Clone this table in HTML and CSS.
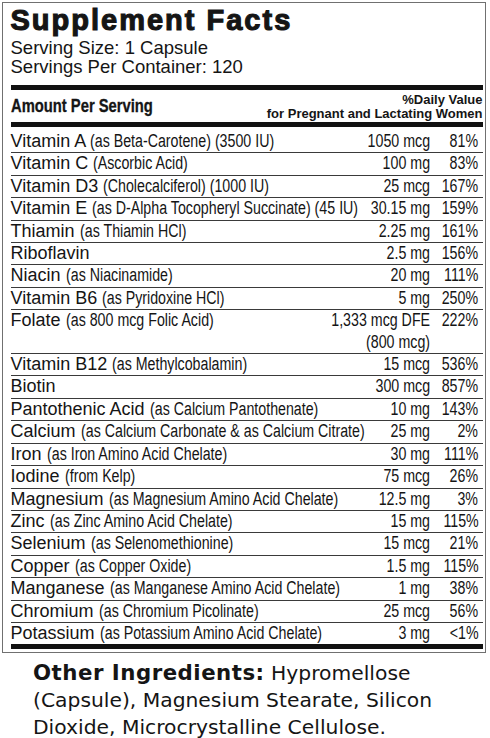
FILE: index.html
```html
<!DOCTYPE html>
<html>
<head>
<meta charset="utf-8">
<link rel="stylesheet" href="styles.css">
</head>
<body>
<div class="facts">
  <h1 class="title">Supplement Facts</h1>
  <div class="serving">Serving Size: 1 Capsule</div>
  <div class="serving">Servings Per Container: 120</div>
  <div class="bar bar-top"></div>
  <div class="head">
    <div class="head-left"><span class="nl hl">Amount Per Serving</span></div>
    <div class="head-right">%Daily Value<br>for Pregnant and Lactating Women</div>
  </div>
  <div class="bar"></div>
  <div class="rows">
    <div class="row first"><div class="name">Vitamin A <span class="nl">(as Beta-Carotene) (3500 IU)</span></div><div class="amt"><span class="nr">1050 mcg</span></div><div class="pct"><span class="nr">81%</span></div></div>
    <div class="row"><div class="name">Vitamin C <span class="nl">(Ascorbic Acid)</span></div><div class="amt"><span class="nr">100 mg</span></div><div class="pct"><span class="nr">83%</span></div></div>
    <div class="row"><div class="name">Vitamin D3 <span class="nl">(Cholecalciferol) (1000 IU)</span></div><div class="amt"><span class="nr">25 mcg</span></div><div class="pct"><span class="nr">167%</span></div></div>
    <div class="row"><div class="name">Vitamin E <span class="nl">(as D-Alpha Tocopheryl Succinate) (45 IU)</span></div><div class="amt"><span class="nr">30.15 mg</span></div><div class="pct"><span class="nr">159%</span></div></div>
    <div class="row"><div class="name">Thiamin <span class="nl">(as Thiamin HCl)</span></div><div class="amt"><span class="nr">2.25 mg</span></div><div class="pct"><span class="nr">161%</span></div></div>
    <div class="row"><div class="name">Riboflavin</div><div class="amt"><span class="nr">2.5 mg</span></div><div class="pct"><span class="nr">156%</span></div></div>
    <div class="row"><div class="name">Niacin <span class="nl">(as Niacinamide)</span></div><div class="amt"><span class="nr">20 mg</span></div><div class="pct"><span class="nr">111%</span></div></div>
    <div class="row"><div class="name">Vitamin B6 <span class="nl">(as Pyridoxine HCl)</span></div><div class="amt"><span class="nr">5 mg</span></div><div class="pct"><span class="nr">250%</span></div></div>
    <div class="row"><div class="name">Folate <span class="nl">(as 800 mcg Folic Acid)</span></div><div class="amt"><span class="nr">1,333 mcg DFE<br>(800 mcg)</span></div><div class="pct"><span class="nr">222%</span></div></div>
    <div class="row"><div class="name">Vitamin B12 <span class="nl">(as Methylcobalamin)</span></div><div class="amt"><span class="nr">15 mcg</span></div><div class="pct"><span class="nr">536%</span></div></div>
    <div class="row"><div class="name">Biotin</div><div class="amt"><span class="nr">300 mcg</span></div><div class="pct"><span class="nr">857%</span></div></div>
    <div class="row"><div class="name">Pantothenic Acid <span class="nl">(as Calcium Pantothenate)</span></div><div class="amt"><span class="nr">10 mg</span></div><div class="pct"><span class="nr">143%</span></div></div>
    <div class="row"><div class="name">Calcium <span class="nl">(as Calcium Carbonate &amp; as Calcium Citrate)</span></div><div class="amt"><span class="nr">25 mg</span></div><div class="pct"><span class="nr">2%</span></div></div>
    <div class="row"><div class="name">Iron <span class="nl">(as Iron Amino Acid Chelate)</span></div><div class="amt"><span class="nr">30 mg</span></div><div class="pct"><span class="nr">111%</span></div></div>
    <div class="row"><div class="name">Iodine <span class="nl">(from Kelp)</span></div><div class="amt"><span class="nr">75 mcg</span></div><div class="pct"><span class="nr">26%</span></div></div>
    <div class="row"><div class="name">Magnesium <span class="nl">(as Magnesium Amino Acid Chelate)</span></div><div class="amt"><span class="nr">12.5 mg</span></div><div class="pct"><span class="nr">3%</span></div></div>
    <div class="row"><div class="name">Zinc <span class="nl">(as Zinc Amino Acid Chelate)</span></div><div class="amt"><span class="nr">15 mg</span></div><div class="pct"><span class="nr">115%</span></div></div>
    <div class="row"><div class="name">Selenium <span class="nl">(as Selenomethionine)</span></div><div class="amt"><span class="nr">15 mcg</span></div><div class="pct"><span class="nr">21%</span></div></div>
    <div class="row"><div class="name">Copper <span class="nl">(as Copper Oxide)</span></div><div class="amt"><span class="nr">1.5 mg</span></div><div class="pct"><span class="nr">115%</span></div></div>
    <div class="row"><div class="name">Manganese <span class="nl">(as Manganese Amino Acid Chelate)</span></div><div class="amt"><span class="nr">1 mg</span></div><div class="pct"><span class="nr">38%</span></div></div>
    <div class="row"><div class="name">Chromium <span class="nl">(as Chromium Picolinate)</span></div><div class="amt"><span class="nr">25 mcg</span></div><div class="pct"><span class="nr">56%</span></div></div>
    <div class="row last"><div class="name">Potassium <span class="nl">(as Potassium Amino Acid Chelate)</span></div><div class="amt"><span class="nr">3 mg</span></div><div class="pct"><span class="nr">&lt;1%</span></div></div>
  </div>
  <div class="bar"></div>
</div>
<p class="other"><b>Other Ingredients:</b> Hypromellose (Capsule), Magnesium Stearate, Silicon Dioxide, Microcrystalline Cellulose.</p>
</body>
</html>
```
FILE: styles.css
```css
html, body {
  margin: 0;
  padding: 0;
  background: #fff;
  overflow: hidden;
}
body {
  color: #151515;
  font-family: "Liberation Sans", Arial, sans-serif;
  width: 490px;
}
.facts {
  margin: 2px 4px 0 2px;
  border: 1.5px solid #707070;
  padding: 0 2.5px 3px 7.5px;
}
.title {
  margin: 1.5px 0 0 0;
  font-size: 29px;
  line-height: 30px;
  font-weight: 700;
  letter-spacing: 2px;
  -webkit-text-stroke: 1.1px #151515;
  color: #151515;
}
.serving {
  font-size: 18.5px;
  line-height: 19px;
}
.title + .serving {
  margin-top: 3.5px;
}
.bar {
  height: 5px;
  background: #111;
}
.bar-top {
  margin-top: 9px;
}
.head {
  display: flex;
  justify-content: space-between;
  align-items: flex-end;
  padding: 2.5px 0 1.5px 0;
}
.head-left {
  font-weight: 700;
  font-size: 18px;
  line-height: 20px;
  margin-bottom: 4.5px;
  white-space: nowrap;
  min-width: 0;
}
.head-right {
  text-align: right;
  font-weight: 700;
  font-size: 13px;
  line-height: 14px;
}
.nl, .nr {
  display: inline-block;
  white-space: nowrap;
  transform: scaleX(0.79);
}
.nl {
  transform-origin: left center;
}
.nl.hl {
  transform: scaleX(0.82);
  -webkit-text-stroke: 0.3px #151515;
}
.nr {
  transform-origin: right center;
  text-align: right;
}
.rows {
  display: flex;
  flex-direction: column;
}
.row {
  display: grid;
  grid-template-columns: minmax(0, 1fr) auto 48px;
  border-bottom: 1px solid #3a3a3a;
  font-size: 18px;
  line-height: 21.4px;
  padding-right: 4px;
}
.row.first {
  padding-top: 4px;
}
.row.last {
  border-bottom: none;
}
.name {
  white-space: nowrap;
  min-width: 0;
}
.amt {
  text-align: right;
  white-space: nowrap;
}
.pct {
  text-align: right;
  white-space: nowrap;
}
.other {
  margin: 5.5px 0 0 0;
  padding: 0 30px 0 33px;
  font-family: "DejaVu Sans", sans-serif;
  font-size: 20.3px;
  line-height: 27px;
  color: #151515;
}
.other b {
  font-weight: 700;
  font-size: 21.3px;
  letter-spacing: 0.5px;
}
```
